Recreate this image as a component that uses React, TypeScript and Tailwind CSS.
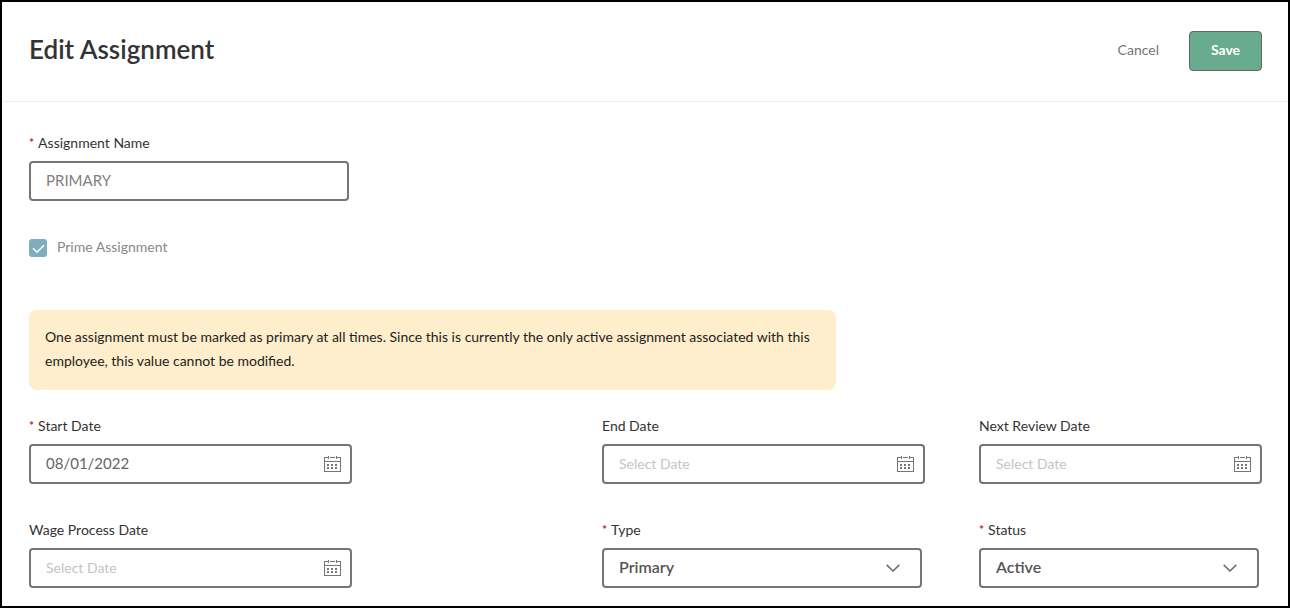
import { useState } from 'react';
import type { ReactNode } from 'react';

function CalendarIcon() {
  return (
    <svg viewBox="0 0 17 16" className="h-4 w-[17px]" fill="none" stroke="#75757a" strokeWidth="1" shapeRendering="crispEdges">
      <path d="M4 1.5H0.5V15.5H16.5V1.5H13M6 1.5H11" />
      <path d="M0.5 5.5H16.5" />
      <path d="M4.5 0V3M12.5 0V3" />
      <path d="M3 9H5M7 9H9M11 9H13M3 12H5M7 12H9M11 12H13" strokeWidth="2" />
    </svg>
  );
}

function ChevronIcon() {
  return (
    <svg viewBox="0 0 14 8" className="h-2 w-3.5" fill="none" stroke="#6b6b6b" strokeWidth="1.5">
      <path d="M0.7 0.9L7 7L13.3 0.9" />
    </svg>
  );
}

interface FieldProps {
  id: string;
  label: string;
  required?: boolean;
  className?: string;
  children: ReactNode;
}

function Field({ id, label, required, className, children }: FieldProps) {
  return (
    <div className={className}>
      <label htmlFor={id} className="mb-2 flex gap-1 text-sm leading-5 text-[#333]">
        {required && <span className="text-xs leading-5 font-bold text-[#c0272d]">*</span>}
        {label}
      </label>
      {children}
    </div>
  );
}

interface DateFieldProps {
  id: string;
  label: string;
  required?: boolean;
  initial?: string;
}

function DateField({ id, label, required, initial = '' }: DateFieldProps) {
  const [value, setValue] = useState(initial);

  return (
    <Field id={id} label={label} required={required} className="max-w-[323px]">
      <div className="flex h-10 items-center rounded border-2 border-[#757575] bg-white pr-[9px]">
        <input
          id={id}
          type="text"
          value={value}
          placeholder="Select Date"
          onChange={(e) => setValue(e.target.value)}
          className="h-full min-w-0 flex-1 bg-transparent pb-[3px] pl-[15px] text-[15px] text-[#666] outline-none placeholder:text-sm placeholder:text-[#c4c4c4]"
        />
        <button type="button" aria-label={`Choose ${label}`}>
          <CalendarIcon />
        </button>
      </div>
    </Field>
  );
}

function SelectField({ id, label, options }: { id: string; label: string; options: string[] }) {
  return (
    <Field id={id} label={label} required className="mr-[3px] max-w-80">
      <div className="relative">
        <select
          id={id}
          className="h-10 w-full appearance-none rounded border-2 border-[#757575] bg-white pr-10 pb-0.5 pl-[15px] text-base font-semibold text-[#555] outline-none"
        >
          {options.map((option) => (
            <option key={option}>{option}</option>
          ))}
        </select>
        <span className="pointer-events-none absolute inset-y-0 right-[22px] flex items-center">
          <ChevronIcon />
        </span>
      </div>
    </Field>
  );
}

export default function App() {
  const [name, setName] = useState('PRIMARY');

  return (
    <form
      onSubmit={(e) => e.preventDefault()}
      className="min-h-screen border-2 border-black bg-white font-['Lato',sans-serif] text-[#333]"
    >
      {/* Header */}
      <header className="flex items-start justify-between border-b border-[#eee] pt-[29px] pr-[26px] pb-[30px] pl-[27px]">
        <h1 className="text-[26px] leading-9 font-semibold">Edit Assignment</h1>
        <div className="flex items-center gap-[30px]">
          <button type="button" className="pb-0.5 text-sm text-[#757575]">Cancel</button>
          <button type="submit" className="h-10 w-[73px] rounded border border-[#666] bg-[#68ab8f] pb-0.5 text-sm font-bold text-white">
            Save
          </button>
        </div>
      </header>

      <main className="pt-[31px] pr-[26px] pb-[18px] pl-[27px]">
        <Field id="name" label="Assignment Name" required className="max-w-80">
          <input
            id="name"
            type="text"
            value={name}
            onChange={(e) => setName(e.target.value)}
            className="h-10 w-full rounded border-2 border-[#757575] px-[15px] pb-[3px] text-[15px] text-[#808080] outline-none"
          />
        </Field>

        <label className="mt-[38px] flex w-fit items-center gap-2.5 text-sm leading-4 text-[#888]">
          <span className="relative flex">
            <input type="checkbox" defaultChecked disabled className="h-[18px] w-[18px] appearance-none rounded-[3px] bg-[#7eaebd]" />
            <svg viewBox="0 0 18 18" className="pointer-events-none absolute inset-0" fill="none" stroke="white" strokeWidth="1.5">
              <path d="M4 9.3L8 13.3L15 6.3" />
            </svg>
          </span>
          <span className="pb-0.5">Prime Assignment</span>
        </label>

        {/* Warning */}
        <p className="mt-[53px] max-w-[807px] rounded-lg bg-[#ffeecb] px-4 pt-[15px] pb-[17px] text-sm leading-6 text-[#222]">
          One assignment must be marked as primary at all times. Since this is currently the only active assignment associated with this employee, this value cannot be modified.
        </p>

        {/* Dates and status */}
        <div className="mt-[26px] grid grid-cols-[573fr_377fr_283fr] gap-y-9">
          <DateField id="start" label="Start Date" required initial="08/01/2022" />
          <DateField id="end" label="End Date" />
          <DateField id="review" label="Next Review Date" />
          <DateField id="wage" label="Wage Process Date" />
          <SelectField id="type" label="Type" options={['Primary', 'Secondary']} />
          <SelectField id="status" label="Status" options={['Active', 'Inactive']} />
        </div>
      </main>
    </form>
  );
}
